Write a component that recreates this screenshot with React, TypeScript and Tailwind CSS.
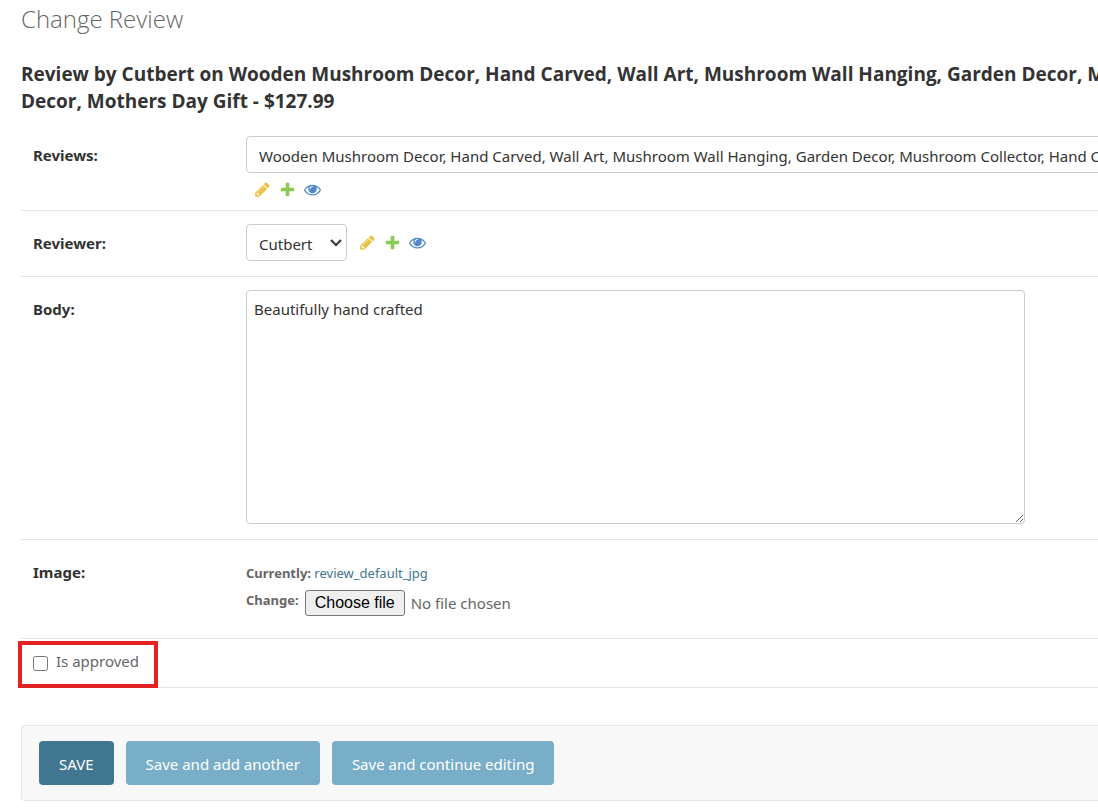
import React from "react";

const PRODUCT =
  "Wooden Mushroom Decor, Hand Carved, Wall Art, Mushroom Wall Hanging, Garden Decor, Mushroom Collector, Hand Carved Decor, Mothers Day Gift";

const PENCIL =
  "M491 1536l91-91-235-235-91 91v107h128v128h107zm523-928q0-22-22-22-10 0-17 7l-542 542q-7 7-7 17 0 22 22 22 10 0 17-7l542-542q7-7 7-17zm-54-192l416 416-832 832h-416v-416zm683 96q0 53-37 90l-166 166-416-416 166-165q36-38 90-38 53 0 91 38l235 234q37 39 37 91z";
const PLUS =
  "M1600 796v192q0 40-28 68t-68 28h-416v416q0 40-28 68t-68 28h-192q-40 0-68-28t-28-68v-416h-416q-40 0-68-28t-28-68v-192q0-40 28-68t68-28h416v-416q0-40 28-68t68-28h192q40 0 68 28t28 68v416h416q40 0 68 28t28 68z";
const EYE =
  "M1664 960q-152-236-381-353 61 104 61 225 0 185-131.5 316.5t-316.5 131.5-316.5-131.5-131.5-316.5q0-121 61-225-229 117-381 353 133 205 333.5 326.5t434.5 121.5 434.5-121.5 333.5-326.5zm-720-384q0-20-14-34t-34-14q-125 0-214.5 89.5t-89.5 214.5q0 20 14 34t34 14 34-14 14-34q0-86 61-147t147-61q20 0 34-14t14-34zm848 384q0 34-20 69-140 230-376.5 368.5t-499.5 138.5-499.5-139-376.5-368q-20-35-20-69t20-69q140-229 376.5-368t499.5-139 499.5 139 376.5 368q20 35 20 69z";

function IconLink({ label, d, color }: { label: string; d: string; color: string }) {
  return (
    <a href="#" aria-label={label} className={color}>
      <svg viewBox="0 0 1792 1792" className="size-[17px] fill-current">
        <path d={d} />
      </svg>
    </a>
  );
}

function RelatedLinks({ name }: { name: string }) {
  return (
    <div className="flex items-center gap-2">
      <IconLink label={`Change ${name}`} d={PENCIL} color="text-[#ebc247]" />
      <IconLink label={`Add ${name}`} d={PLUS} color="text-[#8acb54]" />
      <IconLink label={`View ${name}`} d={EYE} color="text-[#5089ca]" />
    </div>
  );
}

function Select({ id, option }: { id: string; option: string }) {
  return (
    <div className="relative shrink-0">
      <select
        id={id}
        className="h-[37px] appearance-none rounded border border-[#ccc] bg-white pt-[3px] pr-[33px] pl-3 text-[15px] text-[#333]"
      >
        <option>{option}</option>
      </select>
      <svg
        viewBox="0 0 12 8"
        className="pointer-events-none absolute top-[15px] right-[5px] h-2 w-3 fill-none stroke-[#333] stroke-2"
      >
        <path d="M1 1l5 5 5-5" />
      </svg>
    </div>
  );
}

function Row({ label, htmlFor, children }: { label: string; htmlFor: string; children: React.ReactNode }) {
  return (
    <div className="flex border-b border-[#e6e6e6] pt-[13px] pb-3 pl-3">
      <label htmlFor={htmlFor} className="w-[213px] shrink-0 pt-[7px] text-[15px] leading-6 font-bold text-[#333]">
        {label}
      </label>
      {children}
    </div>
  );
}

const buttonClass = "h-11 rounded px-5 pt-[2px] text-[15px] text-white";

export default function App() {
  return (
    <main className="overflow-x-hidden bg-white pb-[10px] pl-[21px] font-['Noto_Sans',sans-serif] text-[15px] text-[#666]">
      <h1 className="pt-[3px] font-['Open_Sans',sans-serif] text-2xl leading-8 font-light">Change Review</h1>
      <h2 className="mt-[26px] mb-2 font-['Open_Sans',sans-serif] text-[19px] leading-[27px] font-bold whitespace-nowrap text-[#333]">
        Review by Cutbert on Wooden Mushroom Decor, Hand Carved, Wall Art, Mushroom Wall Hanging, Garden Decor,
        Mushroom Collector, Hand Carved
        <br />
        Decor, Mothers Day Gift - $127.99
      </h2>
      <form onSubmit={(e) => e.preventDefault()}>
        <Row label="Reviews:" htmlFor="reviews">
          <div className="flex flex-col gap-2">
            <Select id="reviews" option={PRODUCT} />
            <div className="pl-2">
              <RelatedLinks name="product" />
            </div>
          </div>
        </Row>
        <Row label="Reviewer:" htmlFor="reviewer">
          <div className="flex items-center gap-3 pb-[3px]">
            <Select id="reviewer" option="Cutbert" />
            <RelatedLinks name="reviewer" />
          </div>
        </Row>
        <Row label="Body:" htmlFor="body">
          <textarea
            id="body"
            defaultValue="Beautifully hand crafted"
            className="mb-[3px] h-[234px] w-[779px] shrink-0 rounded border border-[#ccc] px-[7px] py-[6px] text-[15px] leading-6 text-[#333]"
          />
        </Row>
        <Row label="Image:" htmlFor="image">
          <div className="pt-2 pb-[10px] text-[13px]">
            <p className="leading-6">
              <b>Currently:</b>{" "}
              <a href="#" className="text-[#417690]">
                review_default_jpg
              </a>
            </p>
            <div className="relative mt-[5px] flex items-center">
              <b className="mr-[6px] mb-1">Change:</b>
              <input id="image" type="file" className="sr-only" />
              <label
                htmlFor="image"
                className="mr-[6px] h-[26px] rounded-[3px] border border-[#767676] bg-[#efefef] px-[9px] font-['Liberation_Sans',Arial,sans-serif] text-base leading-6 text-black"
              >
                Choose file
              </label>
              <span className="text-[15px]">No file chosen</span>
            </div>
          </div>
        </Row>
        <div className="flex border-b border-[#e6e6e6] pt-[10px] pb-[14px] pl-3">
          <div className="relative flex items-center">
            <input id="approved" type="checkbox" className="mt-1 mr-2 size-[15px]" />
            <label htmlFor="approved" className="leading-6">
              Is approved
            </label>
            <div className="pointer-events-none absolute -top-2 -right-[19px] -bottom-[15px] -left-[15px] border-4 border-[#e32222]" />
          </div>
        </div>
        <div className="mt-[37px] flex gap-3 rounded-l border border-r-0 border-[#e6e6e6] bg-[#f8f8f8] py-[15px] pl-[17px]">
          <button type="submit" className={`${buttonClass} bg-[#417690]`}>
            SAVE
          </button>
          <button type="submit" className={`${buttonClass} bg-[#79aec8]`}>
            Save and add another
          </button>
          <button type="submit" className={`${buttonClass} bg-[#79aec8]`}>
            Save and continue editing
          </button>
        </div>
      </form>
    </main>
  );
}
